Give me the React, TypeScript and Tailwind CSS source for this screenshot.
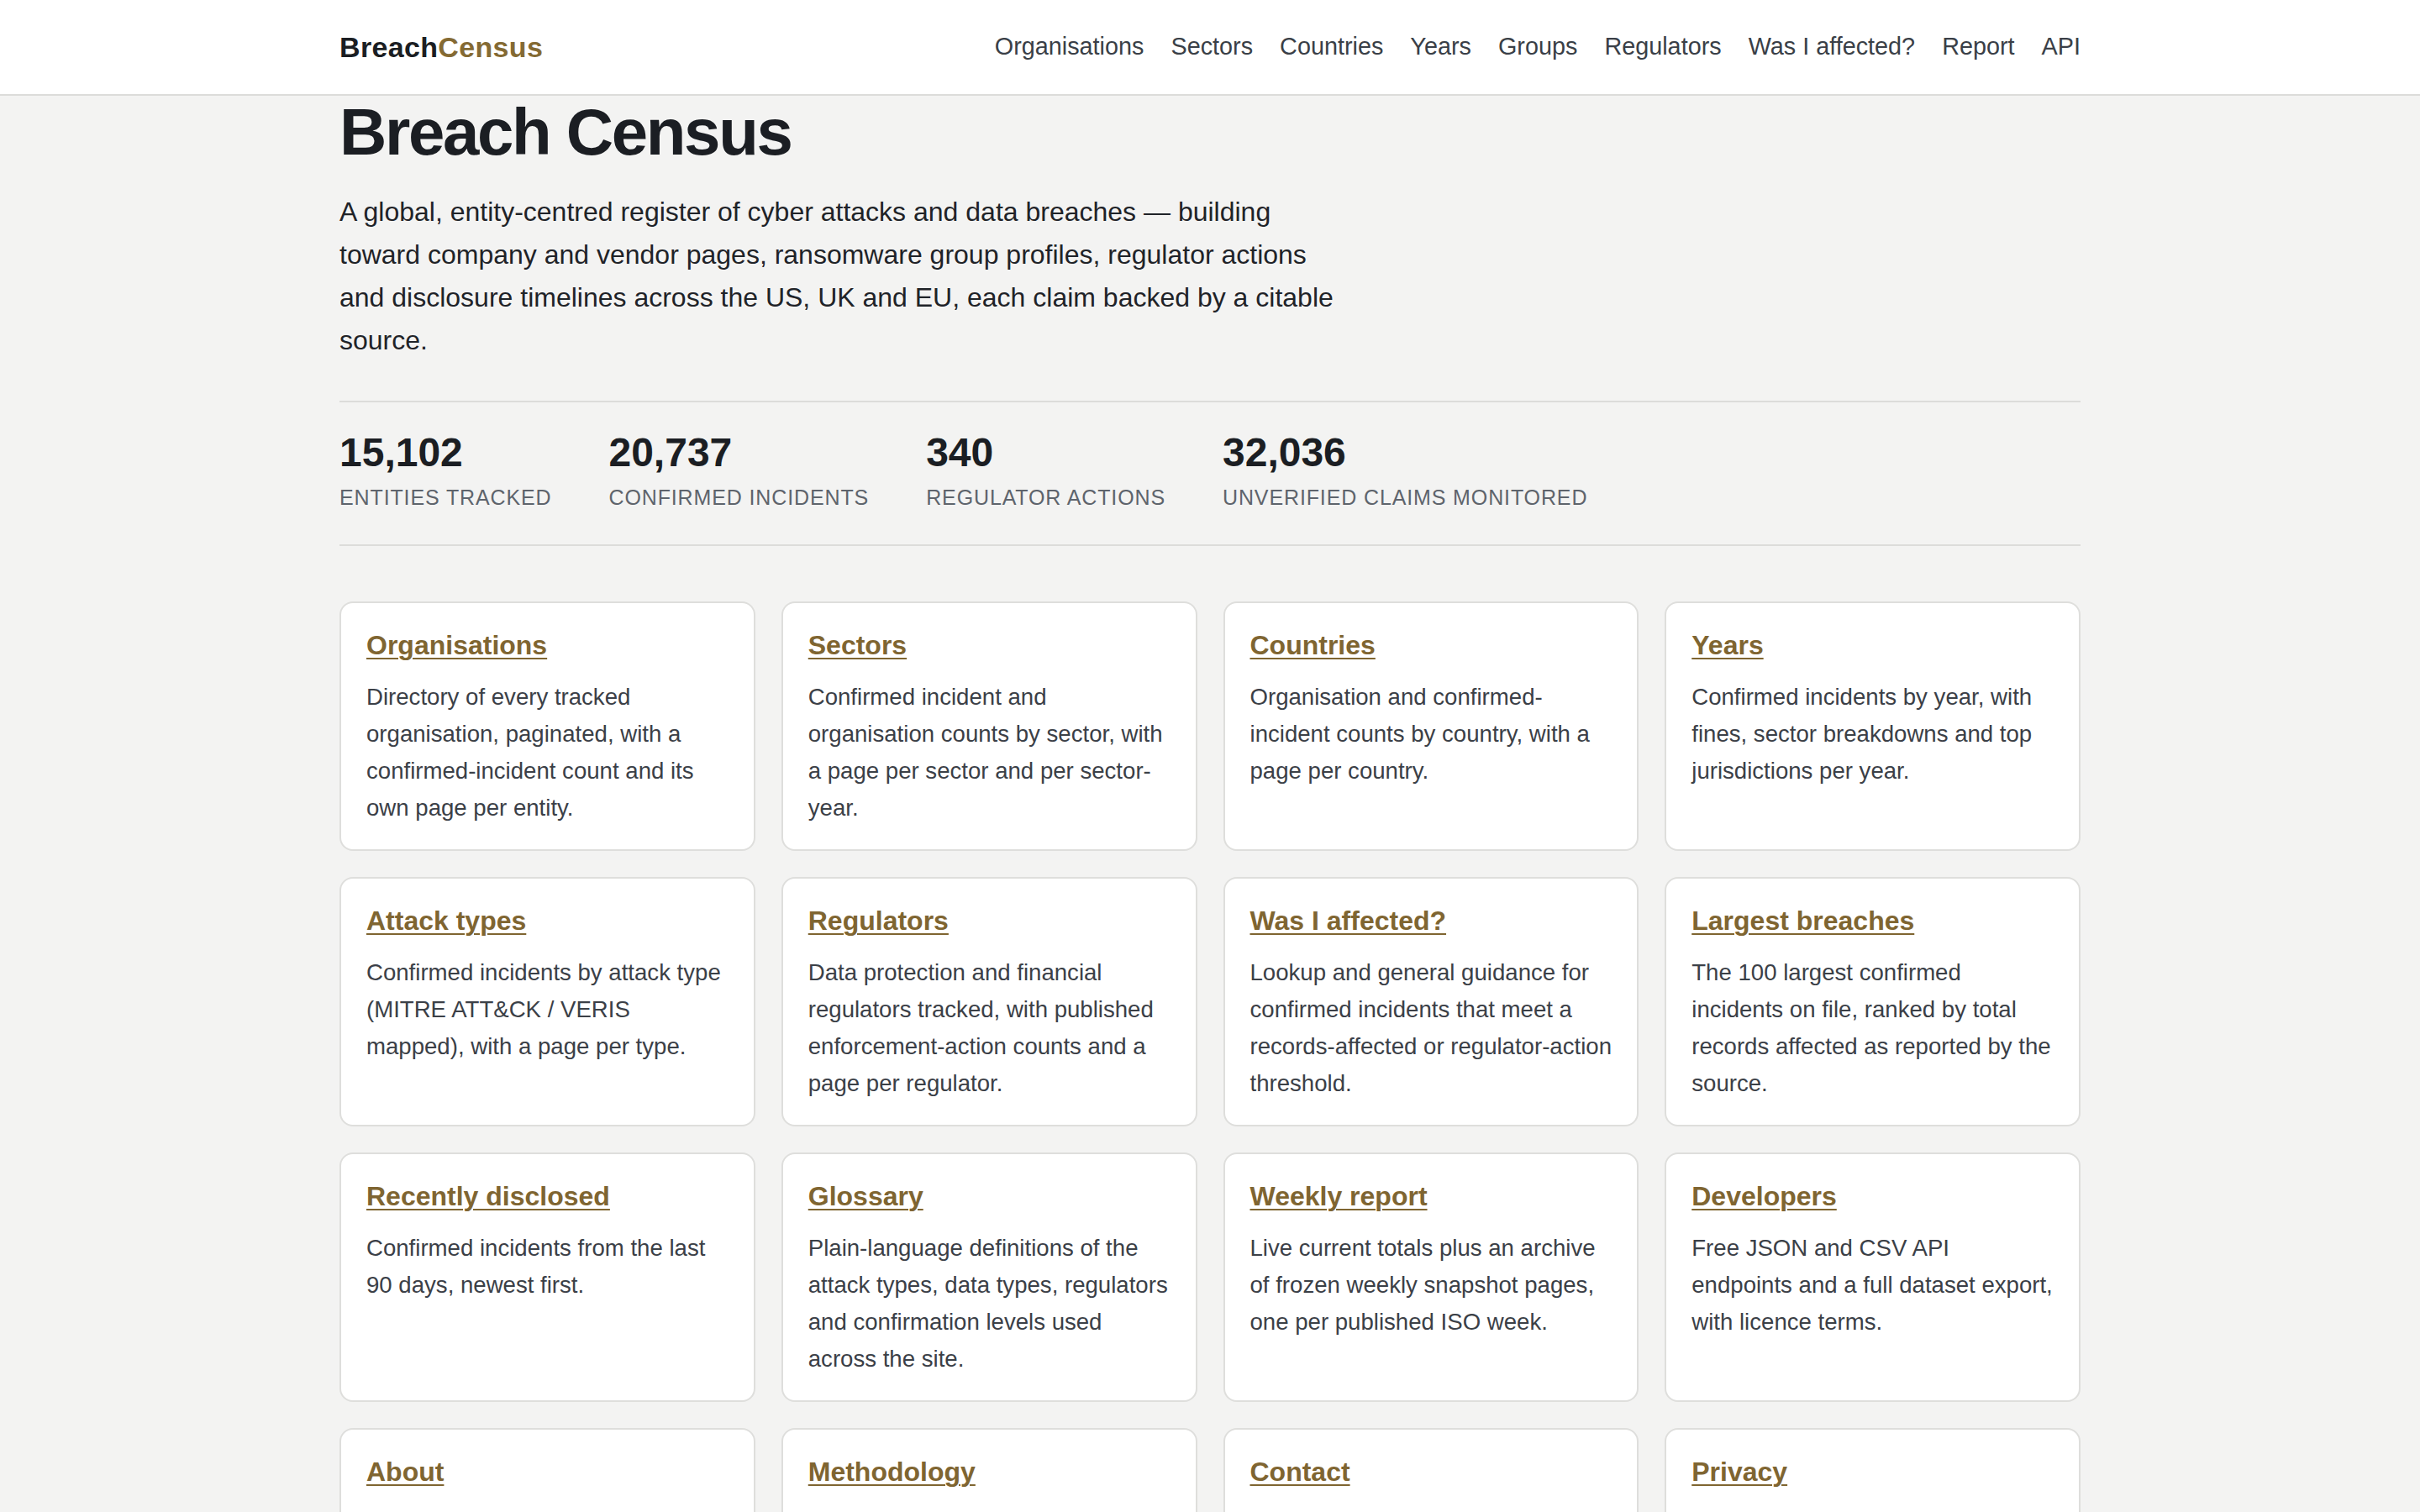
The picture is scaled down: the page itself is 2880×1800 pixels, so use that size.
const NAV = ["Organisations", "Sectors", "Countries", "Years", "Groups", "Regulators", "Was I affected?", "Report", "API"];

const STATS = [
  { value: "15,102", label: "Entities tracked" },
  { value: "20,737", label: "Confirmed incidents" },
  { value: "340", label: "Regulator actions" },
  { value: "32,036", label: "Unverified claims monitored" },
];

const SECTIONS = [
  {
    title: "Organisations",
    body: "Directory of every tracked organisation, paginated, with a confirmed-incident count and its own page per entity.",
  },
  {
    title: "Sectors",
    body: "Confirmed incident and organisation counts by sector, with a page per sector and per sector-year.",
  },
  {
    title: "Countries",
    body: "Organisation and confirmed-incident counts by country, with a page per country.",
  },
  {
    title: "Years",
    body: "Confirmed incidents by year, with fines, sector breakdowns and top jurisdictions per year.",
  },
  {
    title: "Attack types",
    body: "Confirmed incidents by attack type (MITRE ATT&CK / VERIS mapped), with a page per type.",
  },
  {
    title: "Regulators",
    body: "Data protection and financial regulators tracked, with published enforcement-action counts and a page per regulator.",
  },
  {
    title: "Was I affected?",
    body: "Lookup and general guidance for confirmed incidents that meet a records-affected or regulator-action threshold.",
  },
  {
    title: "Largest breaches",
    body: "The 100 largest confirmed incidents on file, ranked by total records affected as reported by the source.",
  },
  {
    title: "Recently disclosed",
    body: "Confirmed incidents from the last 90 days, newest first.",
  },
  {
    title: "Glossary",
    body: "Plain-language definitions of the attack types, data types, regulators and confirmation levels used across the site.",
  },
  {
    title: "Weekly report",
    body: "Live current totals plus an archive of frozen weekly snapshot pages, one per published ISO week.",
  },
  {
    title: "Developers",
    body: "Free JSON and CSV API endpoints and a full dataset export, with licence terms.",
  },
  {
    title: "About",
    body: "Who runs the census, how it is funded and how to reach the editors.",
  },
  {
    title: "Methodology",
    body: "How incidents are sourced, confirmed, deduplicated and attributed to entities.",
  },
  {
    title: "Contact",
    body: "Corrections, source submissions and press enquiries.",
  },
  {
    title: "Privacy",
    body: "What this site collects, what it does not, and how long it is kept.",
  },
];

export default function App() {
  return (
    <div className="min-h-screen bg-[#f3f3f2] font-['Liberation_Sans',Arial,sans-serif] text-[#1b1e23]">
      <header className="border-b-2 border-[#dcdcda] bg-white">
        <div className="mx-auto flex h-[112px] max-w-[2072px] items-center justify-between">
          <a className="text-[34px] font-bold tracking-[0.01em]">
            Breach<span className="text-[#846a33]">Census</span>
          </a>
          <nav className="flex items-center gap-[32px] text-[28.8px] text-[#3a3f47]">
            {NAV.map((item) => (
              <a key={item}>{item}</a>
            ))}
          </nav>
        </div>
      </header>

      <main className="mx-auto max-w-[2072px]">
        <h1 className="text-[78px] font-bold leading-[86px] tracking-[-0.03em]">Breach Census</h1>
        <p className="mt-[27px] max-w-[1200px] text-[32px] leading-[51px] text-[#1f2328]">
          A global, entity-centred register of cyber attacks and data breaches — building toward company
          and vendor pages, ransomware group profiles, regulator actions and disclosure timelines across
          the US, UK and EU, each claim backed by a citable source.
        </p>

        <div className="mt-[46px] flex gap-[68px] border-y-2 border-[#dcdcda] pt-[32px] pb-[38px]">
          {STATS.map((s) => (
            <div key={s.label}>
              <div className="text-[48px] font-bold leading-[56px]">{s.value}</div>
              <div className="mt-[7px] text-[25px] uppercase leading-[36px] tracking-[0.035em] text-[#5e646c]">
                {s.label}
              </div>
            </div>
          ))}
        </div>

        <div className="mt-[66px] grid grid-cols-4 gap-[31px] pb-[64px]">
          {SECTIONS.map((s) => (
            <div key={s.title} className="rounded-[16px] border-2 border-[#dededc] bg-white px-[30px] pt-[31px] pb-[27px]">
              <a className="text-[32px] font-bold leading-[38px] text-[#7f6531] underline decoration-2 underline-offset-[4px]">
                {s.title}
              </a>
              <p className="mt-[21px] text-[27.6px] leading-[44px] text-[#3b4047]">{s.body}</p>
            </div>
          ))}
        </div>
      </main>
    </div>
  );
}
